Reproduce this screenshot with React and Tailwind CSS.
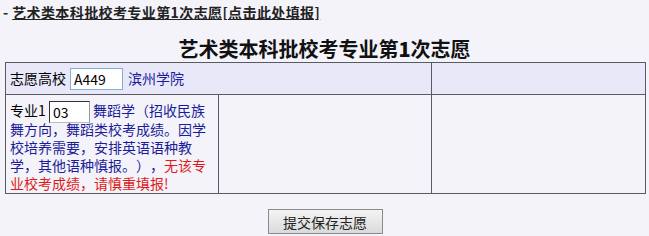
export default function App() {
  const font = { fontFamily: '"Noto Sans CJK SC", "Liberation Sans", sans-serif' }
  return (
    <div className="w-[649px] h-[236px] overflow-hidden bg-[#f3f3f9] text-[14px] text-black [text-spacing-trim:space-all]" style={font}>
      {/* top link */}
      <div className="pl-[3px] pt-[4px] leading-[16px] font-bold text-[#222] tracking-[0.4px]">
        <span>- </span>
        <a href="#" className="underline">艺术类本科批校考专业第1次志愿[点击此处填报]</a>
      </div>

      {/* title */}
      <div className="mt-[17px] text-center text-[20px] leading-[24px] font-bold text-[#111]">
        艺术类本科批校考专业第<span className="font-extrabold">1</span>次志愿
      </div>

      <table className="ml-[5px] mt-[1px] w-[640px] table-fixed border-collapse">
        <colgroup>
          <col className="w-[213px]" />
          <col className="w-[213px]" />
          <col className="w-[214px]" />
        </colgroup>
        <tbody>
          <tr className="h-[32px] bg-[#e8e8f9]">
            <td colSpan={2} className="border border-[#5a5a62] px-[4px] align-middle">
              <div className="flex items-center">
                <span>志愿高校</span>
                <input
                  defaultValue="A449"
                  className="ml-[4px] w-[53px] h-[22px] border border-[#7fb2cc] bg-white px-[3px] text-[14px] outline-none"
                  style={font}
                />
                <span className="ml-[5px] text-[#1c1c9a]">滨州学院</span>
              </div>
            </td>
            <td className="border border-[#5a5a62]"></td>
          </tr>
          <tr className="h-[99px]">
            <td className="border border-[#5a5a62] px-[4px] pt-[6px] pb-0 align-top leading-[18px]">
              <span>专业1 </span>
              <input
                defaultValue="03"
                className="-my-[3px] w-[41px] h-[22px] border border-[#333] border-r-[#999] border-b-[#bbb] bg-white px-[3px] text-[14px] outline-none align-middle"
                style={font}
              />
              <span className="text-[#1c1c9a]"> 舞蹈学（招收民族舞方向，舞蹈类校考成绩。因学校培养需要，安排英语语种教学，其他语种慎报。），</span>
              <span className="text-[#e01a1a]">无该专业校考成绩，请慎重填报!</span>
            </td>
            <td className="border border-[#5a5a62]"></td>
            <td className="border border-[#5a5a62]"></td>
          </tr>
        </tbody>
      </table>

      <div className="mt-[15px] flex justify-center pl-[1px]">
        <button
          className="w-[115px] h-[25px] border border-[#8a8a8a] bg-gradient-to-b from-[#f4f4f4] to-[#dadada] text-[14px] leading-[20px] text-[#222]"
          style={font}
        >
          提交保存志愿
        </button>
      </div>
    </div>
  )
}
